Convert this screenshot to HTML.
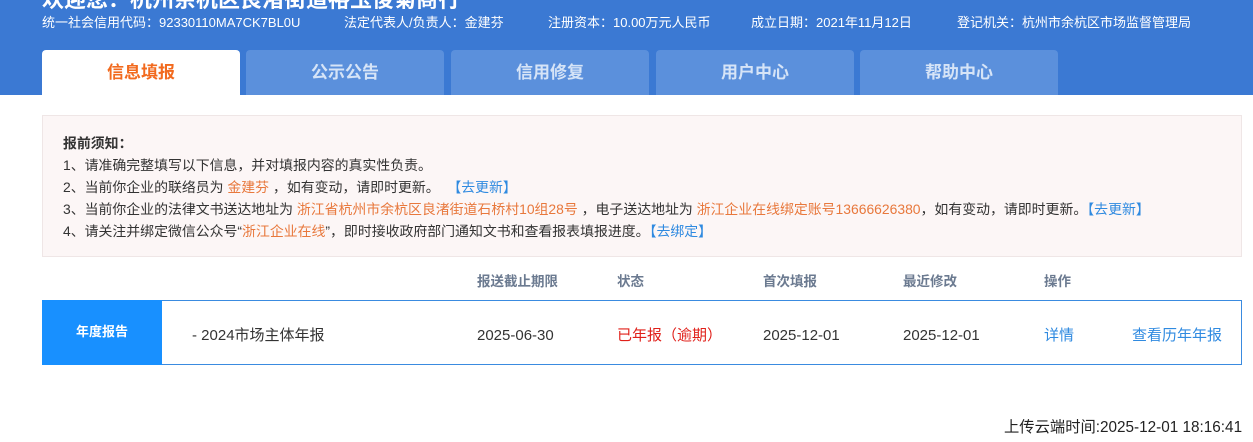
<!DOCTYPE html>
<html><head><meta charset="utf-8"><style>
*{margin:0;padding:0;box-sizing:border-box}
body{width:1253px;height:442px;background:#fff;font-family:"Liberation Sans","Noto Sans CJK SC",sans-serif;position:relative;overflow:hidden;color:#333}
.hd{position:absolute;left:0;top:0;width:1253px;height:95px;background:#3b79d3}
.a{position:absolute;white-space:nowrap}
.title{left:42px;top:-18px;color:#fff;font-size:22px;font-weight:bold}
.info{top:14px;color:#fff;font-size:13px;line-height:18px}
.tab{position:absolute;top:50px;width:198px;height:45px;background:#5b90dc;border-radius:4px 4px 0 0;color:#d6e4f7;font-size:17px;font-weight:bold;text-align:center;line-height:46px}
.tab.on{background:#fff;color:#f26a1e}
.notice{position:absolute;left:42px;top:115px;width:1200px;height:142px;background:#fcf6f6;border:1px solid #efe6e6}
.notice p{position:absolute;left:20px;font-size:13.9px;line-height:20px;white-space:nowrap;color:#333}
.o{color:#e8783c}.b{color:#2f8ae0}
.th{top:272px;font-size:13.5px;line-height:20px;font-weight:bold;color:#6b7a90}
.row{position:absolute;left:42px;top:300px;width:1200px;height:65px;border:1px solid #3a8be0}
.lab{position:absolute;left:42px;top:300px;width:120px;height:65px;background:#1890ff;color:#fff;font-weight:bold;font-size:13px;text-align:center;line-height:63px}
.td{top:326px;font-size:15px;line-height:20px;color:#333}
</style></head><body>
<div class="hd"></div>
<div class="a title">欢迎您：杭州余杭区良渚街道裕玉俊菊商行</div>
<div class="a info" style="left:42px">统一社会信用代码：92330110MA7CK7BL0U</div>
<div class="a info" style="left:344px">法定代表人/负责人：金建芬</div>
<div class="a info" style="left:548px">注册资本：10.00万元人民币</div>
<div class="a info" style="left:751px">成立日期：2021年11月12日</div>
<div class="a info" style="left:957px">登记机关：杭州市余杭区市场监督管理局</div>
<div class="tab on" style="left:42px">信息填报</div>
<div class="tab" style="left:246px">公示公告</div>
<div class="tab" style="left:451px">信用修复</div>
<div class="tab" style="left:656px">用户中心</div>
<div class="tab" style="left:860px">帮助中心</div>
<div class="notice">
<p style="top:17px;font-weight:bold">报前须知：</p>
<p style="top:39px">1、请准确完整填写以下信息，并对填报内容的真实性负责。</p>
<p style="top:61px">2、当前你企业的联络员为 <span class="o">金建芬</span> ，如有变动，请即时更新。 &nbsp;<span class="b">【去更新】</span></p>
<p style="top:83px">3、当前你企业的法律文书送达地址为 <span class="o">浙江省杭州市余杭区良渚街道石桥村10组28号</span> ，电子送达地址为 <span class="o">浙江企业在线绑定账号13666626380</span>，如有变动，请即时更新。<span class="b">【去更新】</span></p>
<p style="top:105px">4、请关注并绑定微信公众号“<span class="o">浙江企业在线</span>”，即时接收政府部门通知文书和查看报表填报进度。<span class="b">【去绑定】</span></p>
</div>
<div class="a th" style="left:477px">报送截止期限</div>
<div class="a th" style="left:617px">状态</div>
<div class="a th" style="left:763px">首次填报</div>
<div class="a th" style="left:903px">最近修改</div>
<div class="a th" style="left:1044px">操作</div>
<div class="row"></div>
<div class="lab">年度报告</div>
<div class="a td" style="left:192px">- 2024市场主体年报</div>
<div class="a td" style="left:477px">2025-06-30</div>
<div class="a td" style="left:617px;color:#e0201a">已年报（逾期）</div>
<div class="a td" style="left:763px">2025-12-01</div>
<div class="a td" style="left:903px">2025-12-01</div>
<div class="a td" style="left:1044px;color:#2f8ae0">详情</div>
<div class="a td" style="left:1132px;color:#2f8ae0">查看历年年报</div>
<div class="a" style="left:1004px;top:418px;font-size:15.3px;line-height:20px;color:#222">上传云端时间:2025-12-01 18:16:41</div>
</body></html>
